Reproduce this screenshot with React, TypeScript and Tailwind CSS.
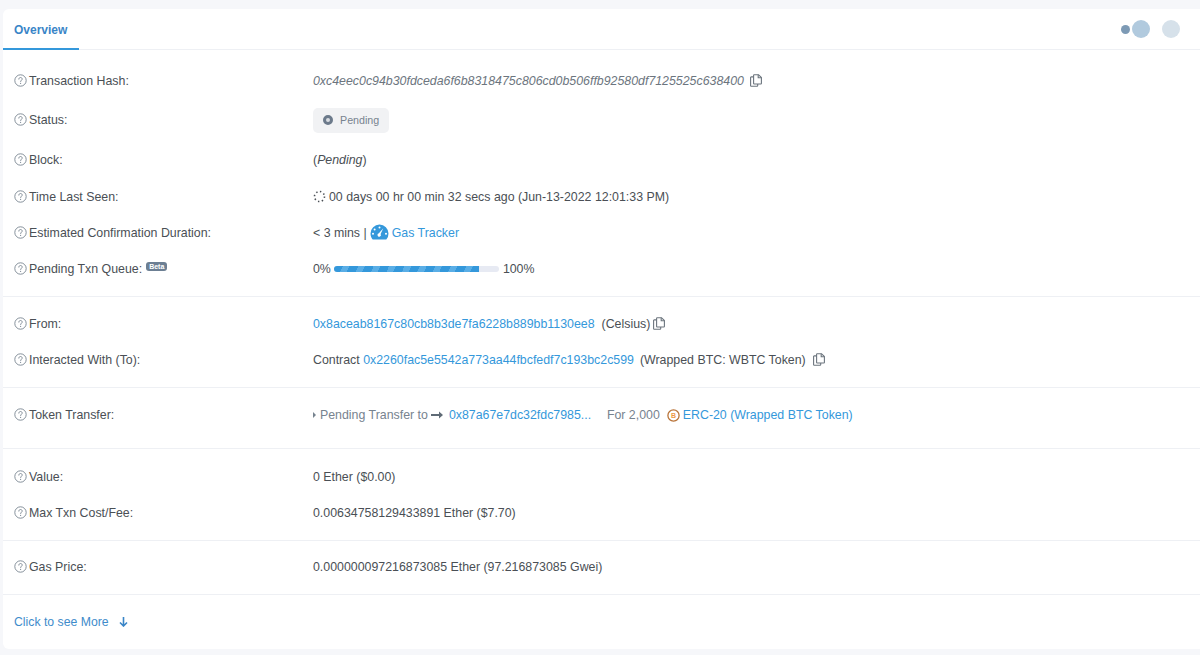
import type { ReactNode } from 'react';

const blue = 'text-[#3498db]';

function HelpIcon() {
  return (
    <svg className="w-[13px] h-[13px] mr-[2px] shrink-0 -translate-y-px text-[#77838f]" viewBox="0 0 13 13" fill="none">
      <circle cx="6.5" cy="6.5" r="5.7" stroke="currentColor" strokeWidth="0.9" />
      <path d="M4.8 5.1c0-1 .8-1.6 1.7-1.6s1.7.6 1.7 1.5c0 1.2-1.6 1.3-1.6 2.5" stroke="currentColor" strokeWidth="0.9" strokeLinecap="round" />
      <circle cx="6.6" cy="9.3" r="0.6" fill="currentColor" />
    </svg>
  );
}

function CopyIcon({ className }: { className?: string }) {
  return (
    <svg className={`w-[12px] h-[13px] -translate-y-px text-[#6c757e] ${className ?? ''}`} viewBox="0 0 12 13" fill="none" stroke="currentColor" strokeWidth="1.1">
      <path d="M3.6 2.9H1.2a.6.6 0 0 0-.6.6v8.2c0 .3.3.6.6.6h5.9c.3 0 .6-.3.6-.6V10" />
      <path d="M4.2.7h4.3l2.9 2.8v5.9c0 .4-.3.6-.6.6H4.2a.6.6 0 0 1-.6-.6V1.3c0-.3.3-.6.6-.6Z" />
      <path d="M8.2.8v3h3" />
    </svg>
  );
}

function Row({ label, badge, children }: { label: string; badge?: boolean; children: ReactNode }) {
  return (
    <div className="flex items-center h-[36px]">
      <div className="w-[299px] shrink-0 flex items-center">
        <HelpIcon />
        <span>{label}</span>
        {badge && (
          <span className="ml-[4px] -mt-[6px] px-[3px] h-[9px] leading-[9px] rounded-[3px] bg-[#6c7f93] text-white text-[7px] font-bold">Beta</span>
        )}
      </div>
      <div className="flex items-center min-w-0 whitespace-nowrap">{children}</div>
    </div>
  );
}

function Divider({ top }: { top: string }) {
  return <div className={`h-px bg-[#eef0f4] -ml-[11px] ${top}`} />;
}

export default function App() {
  return (
    <div className="h-[655px] overflow-hidden bg-[#f6f7fa] pt-[9px] pl-[3px] font-['Liberation_Sans',Arial,sans-serif] text-[12.36px] text-[#4a4f55]">
      <div className="h-[640px] rounded-l-[6px] bg-white">
        <div className="h-[41px] flex items-stretch justify-between border-b border-[#eef0f4]">
          <div className="w-[76px] h-[41px] pl-[11px] pt-[12px] border-b-2 border-[#3498db] font-bold text-[12px] text-[#3a85c7]">Overview</div>
          <div className="flex items-center pr-[20px] blur-[0.4px]">
            <span className="w-[9px] h-[9px] rounded-full bg-[#7d9ab5]" />
            <span className="ml-[2px] w-[18px] h-[18px] rounded-full bg-[#b1cade]" />
            <span className="ml-[12px] w-[18px] h-[18px] rounded-full bg-[#d6e1ea]" />
          </div>
        </div>

        <div className="pl-[11px] pt-[13px]">
          <Row label="Transaction Hash:">
            <span className="italic text-[#6c757e]">0xc4eec0c94b30fdceda6f6b8318475c806cd0b506ffb92580df7125525c638400</span>
            <CopyIcon className="ml-[6px]" />
          </Row>
          <div className="flex items-center h-[42px]">
            <div className="w-[299px] shrink-0 flex items-center">
              <HelpIcon />
              <span>Status:</span>
            </div>
            <div className="flex items-center h-[25px] px-[10px] rounded-[5px] bg-[#f1f2f4] text-[#77838f] text-[10.7px]">
              <span className="w-[10px] h-[10px] rounded-full border-[3px] border-[#6c7a8b] bg-[#d9dde2] mr-[7px]" />
              Pending
            </div>
          </div>
          <div className="flex items-center h-[38px]">
            <div className="w-[299px] shrink-0 flex items-center">
              <HelpIcon />
              <span>Block:</span>
            </div>
            <span>(<span className="italic">Pending</span>)</span>
          </div>
          <Row label="Time Last Seen:">
            <svg className="w-[13px] h-[13px] mr-[3px] -translate-y-px text-[#4a4f55]" viewBox="0 0 13 13" fill="none" stroke="currentColor" strokeWidth="1.6">
              <circle cx="6.5" cy="6.5" r="5" strokeDasharray="1.4 2.5" />
            </svg>
            00 days 00 hr 00 min 32 secs ago (Jun-13-2022 12:01:33 PM)
          </Row>
          <Row label="Estimated Confirmation Duration:">
            &lt; 3 mins |
            <svg className="w-[19px] h-[16px] ml-[3px] mr-[3px] -mt-[2px] text-[#3498db]" viewBox="0 0 19 16" fill="currentColor">
              <path d="M9.5.5a9 9 0 0 0-9 9c0 2.3.8 4.4 2.2 6h13.6a9 9 0 0 0 2.2-6 9 9 0 0 0-9-9Z" />
              <circle cx="9.5" cy="3.4" r="1" fill="white" />
              <circle cx="4.6" cy="5.4" r="1" fill="white" />
              <circle cx="3" cy="9.8" r="1" fill="white" />
              <circle cx="16" cy="9.8" r="1" fill="white" />
              <path d="M13.3 4.2 10.6 10a1.7 1.7 0 1 1-1.7-.7l4.4-5.1Z" fill="white" />
            </svg>
            <span className={blue}>Gas Tracker</span>
          </Row>
          <Row label="Pending Txn Queue:" badge>
            0%
            <div className="ml-[3px] mr-[4px] w-[165px] h-[6px] rounded-full bg-[#e7eaf3] overflow-hidden">
              <div className="w-[145px] h-full bg-[repeating-linear-gradient(115deg,#3498db_0px,#3498db_8px,#5aaee6_8px,#5aaee6_14px)]" />
            </div>
            100%
          </Row>

          <Divider top="mt-[9px]" />
          <div className="pt-[9px]">
            <Row label="From:">
              <span className={blue}>0x8aceab8167c80cb8b3de7fa6228b889bb1130ee8</span>
              <span className="ml-[7px]">(Celsius)</span>
              <CopyIcon className="ml-[3px]" />
            </Row>
            <Row label="Interacted With (To):">
              Contract&nbsp;
              <span className={blue}>0x2260fac5e5542a773aa44fbcfedf7c193bc2c599</span>
              <span className="ml-[6px]">(Wrapped BTC: WBTC Token)</span>
              <CopyIcon className="ml-[7px]" />
            </Row>
          </div>

          <Divider top="mt-[9px]" />
          <div className="pt-[9px]">
            <Row label="Token Transfer:">
              <span className="w-0 h-0 mr-[4px] border-y-[3px] border-y-transparent border-l-[3px] border-l-[#77838f]" />
              <span className="text-[#77838f]">Pending Transfer to</span>
              <svg className="w-[12px] h-[8px] ml-[3px] mr-[6px] text-[#5f6b76]" viewBox="0 0 12 8" fill="currentColor">
                <path d="M0 3h8V.5L12 4 8 7.5V5H0Z" />
              </svg>
              <span className={`${blue} w-[146px]`}>0x87a67e7dc32fdc7985...</span>
              <span className="ml-[12px] text-[#77838f]">For 2,000</span>
              <svg className="w-[13px] h-[13px] ml-[7px] mr-[3px]" viewBox="0 0 13 13">
                <circle cx="6.5" cy="6.5" r="5.6" fill="#fff" stroke="#b9743a" strokeWidth="1.3" />
                <text x="6.5" y="9" textAnchor="middle" fontSize="7" fontWeight="700" fill="#ee9a45">B</text>
              </svg>
              <span className={blue}>ERC-20 (Wrapped BTC Token)</span>
            </Row>
          </div>

          <Divider top="mt-[15px]" />
          <div className="pt-[10px]">
            <Row label="Value:">0 Ether ($0.00)</Row>
            <Row label="Max Txn Cost/Fee:">0.00634758129433891 Ether ($7.70)</Row>
          </div>

          <Divider top="mt-[9px]" />
          <div className="pt-[8px]">
            <Row label="Gas Price:">0.000000097216873085 Ether (97.216873085 Gwei)</Row>
          </div>

          <Divider top="mt-[9px]" />
          <div className="flex items-center h-[36px] mt-[9px] text-[#3f8ccb]">
            <span className="text-[12.25px]">Click to see More</span>
            <svg className="w-[9px] h-[10px] ml-[10px] text-[#3a85c7]" viewBox="0 0 9 10" fill="none" stroke="currentColor" strokeWidth="1.6">
              <path d="M4.5 0v9M1 5.5l3.5 3.5L8 5.5" />
            </svg>
          </div>
        </div>
      </div>
    </div>
  );
}
